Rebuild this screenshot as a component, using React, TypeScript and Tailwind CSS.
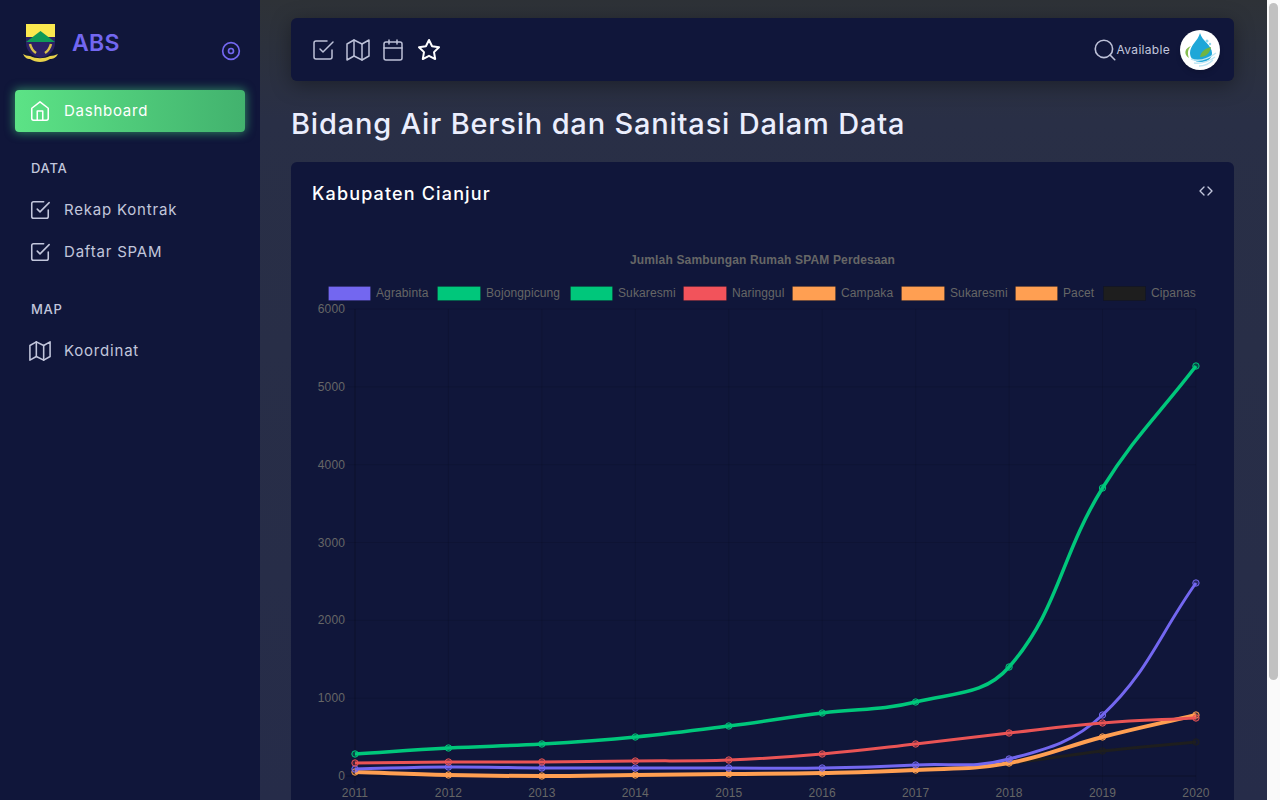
import { FiCheckSquare, FiChevronLeft, FiChevronRight, FiCalendar, FiDisc, FiHome, FiMap, FiSearch, FiStar } from 'react-icons/fi';

const MONT = "font-['Inter','Noto_Sans',sans-serif]";

const XS = Array.from({ length: 10 }, (_, i) => 355 + i * 93.44);

// y pixel values of each data set, read from the picture
const SERIES = [
  { color: '#1e1e1e', ys: [772, 775, 776, 775, 774, 773, 770, 763, 751, 742], width: 3 },
  { color: '#ff9f52', ys: [772, 775, 776, 775, 774, 773, 770, 763, 737, 715], width: 4 },
  { color: '#7367f0', ys: [769, 767, 768, 768, 768, 768, 765, 759, 715, 583], width: 3 },
  { color: '#ea5455', ys: [763, 762, 762, 761, 760, 754, 744, 733, 723, 718], width: 3 },
  { color: '#00c77b', ys: [754, 748, 744, 737, 726, 713, 702, 667, 488, 366], width: 3.5 },
];

const LEGEND = [
  { label: 'Agrabinta', x: 328, w: 43, color: '#7367f0' },
  { label: 'Bojongpicung', x: 437, w: 44, color: '#00c77b' },
  { label: 'Sukaresmi', x: 570, w: 43, color: '#00c77b' },
  { label: 'Naringgul', x: 683, w: 44, color: '#f2535b' },
  { label: 'Campaka', x: 792, w: 44, color: '#ff9f52' },
  { label: 'Sukaresmi', x: 901, w: 44, color: '#ff9f52' },
  { label: 'Pacet', x: 1015, w: 43, color: '#ff9f52' },
  { label: 'Cipanas', x: 1103, w: 43, color: '#1e1e1e' },
];

function splinePath(ys: number[]) {
  const t = 0.4;
  const pts = ys.map((y, i) => ({ x: XS[i], y }));
  const cps = pts.map((p, i) => {
    const a = pts[Math.max(i - 1, 0)];
    const b = pts[Math.min(i + 1, pts.length - 1)];
    const d01 = Math.hypot(p.x - a.x, p.y - a.y);
    const d12 = Math.hypot(b.x - p.x, b.y - p.y);
    const s01 = d01 / (d01 + d12 || 1);
    const s12 = d12 / (d01 + d12 || 1);
    return {
      px: p.x - t * s01 * (b.x - a.x),
      py: p.y - t * s01 * (b.y - a.y),
      nx: p.x + t * s12 * (b.x - a.x),
      ny: p.y + t * s12 * (b.y - a.y),
    };
  });
  let d = `M${pts[0].x} ${pts[0].y}`;
  for (let i = 1; i < pts.length; i++) {
    d += ` C${cps[i - 1].nx} ${cps[i - 1].ny} ${cps[i].px} ${cps[i].py} ${pts[i].x} ${pts[i].y}`;
  }
  return d;
}

function Chart() {
  const labelFont = { fontFamily: "'Liberation Sans', Arial, sans-serif", fontSize: 12, fill: '#666', letterSpacing: 0.12 };
  // drawn in page coordinates, hence the viewBox
  return (
    <svg viewBox="312 230 902 570" width={902} height={570} className="block">
      <text x={762.5} y={264} textAnchor="middle" {...labelFont} fontWeight={700} letterSpacing={0.16}>
        Jumlah Sambungan Rumah SPAM Perdesaan
      </text>
      {LEGEND.map((l) => (
        <g key={l.x}>
          <rect x={l.x + 0.5} y={286.5} width={l.w - 1} height={14} fill={l.color} stroke="#000" strokeOpacity={0.15} />
          <text x={l.x + l.w + 5} y={297} {...labelFont}>
            {l.label}
          </text>
        </g>
      ))}
      {[0, 1, 2, 3, 4, 5, 6].map((n) => {
        const y = 776 - n * 77.83;
        return (
          <g key={n}>
            <line x1={346} x2={1196} y1={y} y2={y} stroke="#000" strokeOpacity={n === 0 ? 0.25 : 0.1} />
            <text x={345} y={y + 4} textAnchor="end" {...labelFont}>
              {n * 1000}
            </text>
          </g>
        );
      })}
      {XS.map((x, i) => (
        <g key={x}>
          <line x1={x} x2={x} y1={309} y2={784} stroke="#000" strokeOpacity={i === 0 ? 0.25 : 0.1} />
          <text x={x} y={797} textAnchor="middle" {...labelFont}>
            {2011 + i}
          </text>
        </g>
      ))}
      {SERIES.map((s) => (
        <g key={s.color}>
          <path d={splinePath(s.ys)} fill="none" stroke={s.color} strokeWidth={s.width} />
          {s.ys.map((y, i) => (
            <circle key={i} cx={XS[i]} cy={y} r={3.2} fill={s.color} fillOpacity={0.25} stroke={s.color} strokeWidth={1} />
          ))}
        </g>
      ))}
    </svg>
  );
}

function NavLink({ icon, label }: { icon: React.ReactNode; label: string }) {
  return (
    <div className="flex h-[42px] items-center gap-[13px] pl-[29px] text-[15px] tracking-[0.8px] text-[#c2c6dc]">
      {icon}
      <span>{label}</span>
    </div>
  );
}

function Logo() {
  return (
    <svg viewBox="0 0 36 40" width={36} height={40}>
      <path d="M4 0h29v19c0 8-6 13-14.500 15C10 32 4 27 4 19z" fill="#2b2166" />
      <path d="M4 0h29v13H4z" fill="#fbe94f" />
      <path d="M4 18L18.500 7 33 18z" fill="#0f9a58" />
      <path d="M8 20c1 4 3 7 6 9M29 20c-1 4-3 7-6 9" stroke="#d8c04a" strokeWidth={2.5} fill="none" />
      <path d="M1 30c2 4 4 5 7 5 6 4 14 4 20 0 3 0 6-1 8-5-3 1-5 2-8 2-6 3-14 3-20 0-3 0-5-1-7-2z" fill="#e8d24a" />
    </svg>
  );
}

function Avatar() {
  return (
    <div className="flex h-10 w-10 items-center justify-center rounded-full bg-white shadow-md">
      <svg viewBox="0 0 40 40" width={40} height={40}>
        <path d="M20 3c2 8 12 12 12 20 0 6-5 9-11 9s-11-3-11-9c0-8 8-12 10-20z" fill="#1ea7d8" />
        <circle cx={27} cy={11} r={1.5} fill="#8fd6ea" />
        <circle cx={30} cy={14} r={1.2} fill="#8fd6ea" />
        <path d="M9 28C3 24 5 18 11 16c-3 3-4 7-2 12z" fill="#86bd4f" />
        <path d="M20 27c1-6 6-9 11-10-1 6-5 10-11 10z" fill="#6fb544" />
        <path d="M11 29c8 3 17 0 25-6M14 33c7 1 14-1 21-6M19 36c5 0 10-2 14-6" stroke="#bfe6f4" strokeWidth={1.5} fill="none" />
      </svg>
    </div>
  );
}

export default function App() {
  return (
    <div className={`flex h-screen overflow-hidden bg-[#262c49] ${MONT}`}>
      <aside className="w-[260px] shrink-0 bg-[#10163a]">
        <div className="flex h-[90px] items-start justify-between pl-[22px] pr-[19px] pt-[24px]">
          <div className="flex items-center gap-[14px]">
            <Logo />
            <span className="-mt-[1px] text-[23px] font-semibold tracking-[0.3px] text-[#7367f0]">ABS</span>
          </div>
          <FiDisc className="mt-[17px] text-[#7367f0]" size={20} />
        </div>
        <div className="mx-[15px] flex h-[42px] items-center gap-[13px] rounded-[4px] bg-gradient-to-r from-[#5ce386] to-[#42b26e] pl-[14px] text-[15px] tracking-[0.75px] text-white shadow-[0_0_10px_1px_rgba(70,220,130,0.55)]">
          <FiHome size={22} strokeWidth={1.7} />
          <span>Dashboard</span>
        </div>
        <div className="mt-[27px] pl-[31px] text-[13px] font-medium leading-[18px] tracking-[0.7px] text-[#c2c6dc]">DATA</div>
        <div className="mt-[12px]">
          <NavLink icon={<FiCheckSquare size={22} strokeWidth={1.7} />} label="Rekap Kontrak" />
          <NavLink icon={<FiCheckSquare size={22} strokeWidth={1.7} />} label="Daftar SPAM" />
        </div>
        <div className="mt-[27px] pl-[31px] text-[13px] font-medium leading-[18px] tracking-[0.7px] text-[#c2c6dc]">MAP</div>
        <div className="mt-[12px]">
          <NavLink icon={<FiMap size={22} strokeWidth={1.7} />} label="Koordinat" />
        </div>
      </aside>

      <main className="flex min-w-0 flex-1 flex-col bg-gradient-to-b from-[#2e3237] via-[#292f46] via-[15%] to-[#262c49] pl-[31px] pr-[33px] pt-[18px]">
        <div className="flex h-[63px] shrink-0 items-center justify-between rounded-[6px] bg-[#10163a] pl-[20px] pr-[14px] shadow-[0_4px_20px_0_rgba(0,0,0,0.35)]">
          <div className="flex items-center gap-[11px] text-[#bdc1d8]">
            <FiCheckSquare size={24} strokeWidth={1.5} />
            <FiMap size={24} strokeWidth={1.5} />
            <FiCalendar size={24} strokeWidth={1.5} />
            <FiStar size={24} strokeWidth={2} className="ml-[1px] text-white" />
          </div>
          <div className="flex items-center">
            <FiSearch size={26} strokeWidth={1.5} className="text-[#bdc1d8]" />
            <span className="-ml-[1px] text-[12px] tracking-[0.3px] text-[#c2c6dc]">Available</span>
            <div className="ml-[10px]">
              <Avatar />
            </div>
          </div>
        </div>
        <h1 className="mt-[23px] shrink-0 text-[29px] font-medium leading-[40px] tracking-[0.8px] text-[#ebeefd]">
          Bidang Air Bersih dan Sanitasi Dalam Data
        </h1>
        <section className="mt-[18px] flex-1 rounded-t-[6px] bg-[#10163a] pl-[21px] pr-[20px]">
          <div className="flex h-[68px] items-center justify-between">
            <h2 className="-mt-[5px] text-[18px] font-medium tracking-[1.15px] text-white">Kabupaten Cianjur</h2>
            <div className="-mr-[4px] -mt-[10px] flex items-center text-[#c2c6dc]">
              <FiChevronLeft size={16} strokeWidth={2} />
              <FiChevronRight size={16} strokeWidth={2} className="-ml-[8px]" />
            </div>
          </div>
          <Chart />
        </section>
      </main>

      <div className="w-[13px] shrink-0 bg-[#fafafa] pl-[2px] pr-[2px] pt-[3px]">
        <div className="h-[677px] rounded-full bg-[#c1c1c1]" />
      </div>
    </div>
  );
}
